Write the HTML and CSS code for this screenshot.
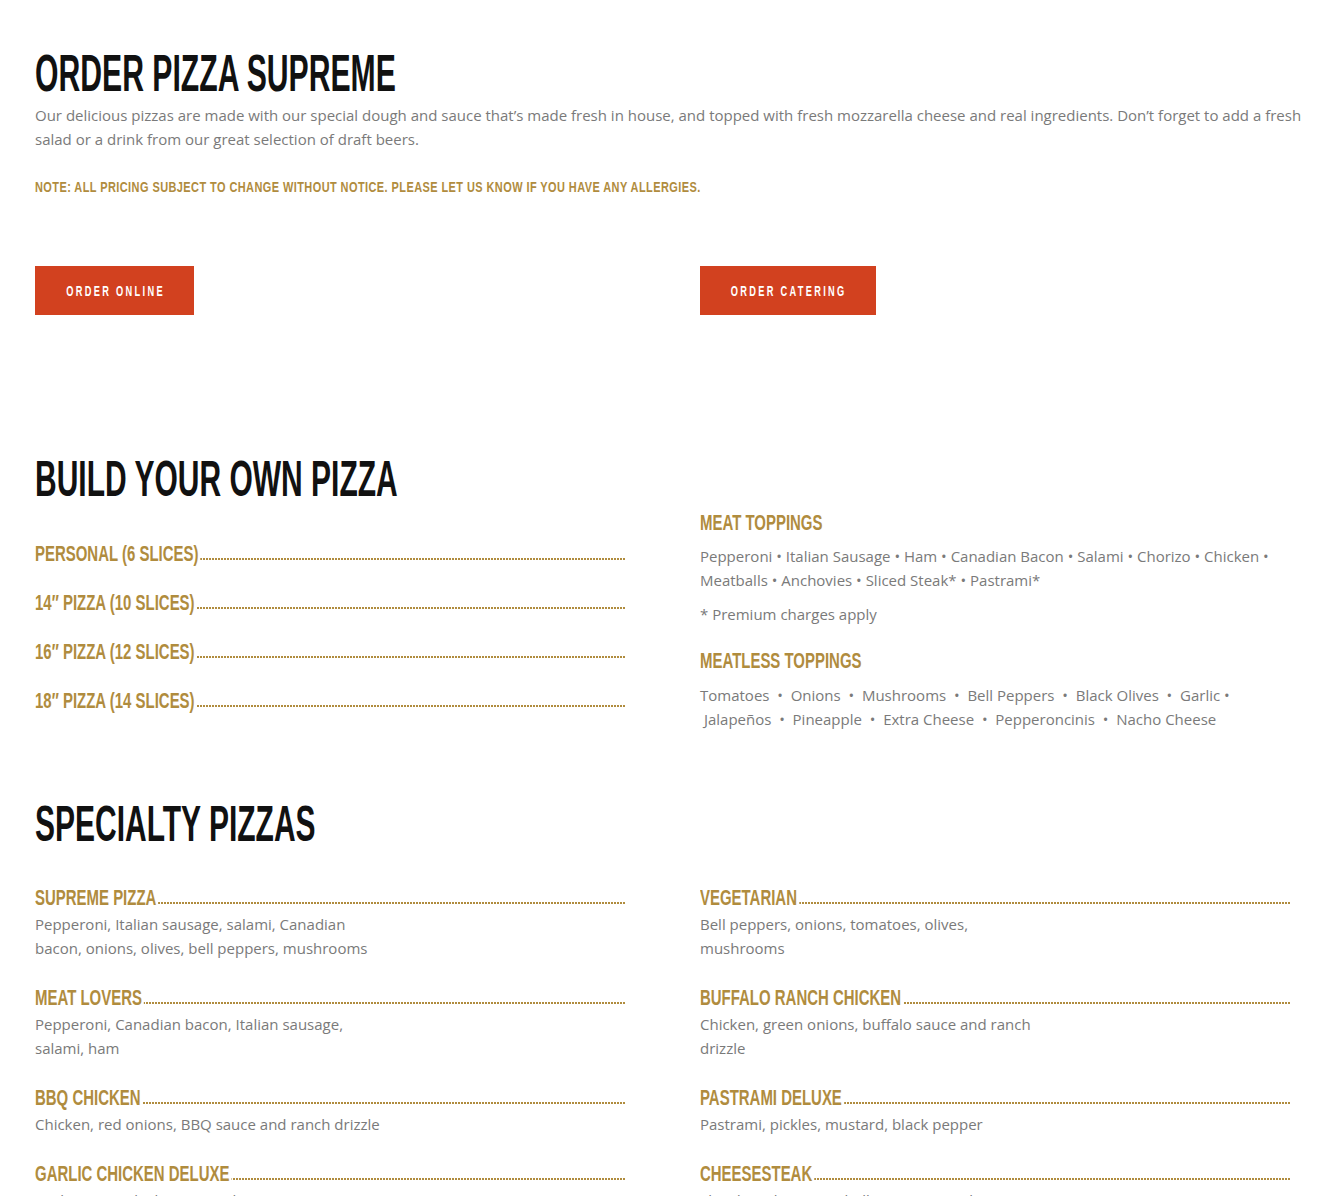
FILE: index.html
```html
<!DOCTYPE html>
<html lang="en">
<head>
<meta charset="utf-8">
<title>Order Pizza Supreme</title>
<link rel="stylesheet" href="styles.css">
</head>
<body>
<main class="page">
  <section class="intro-section">
    <h1 class="title-xl">ORDER PIZZA SUPREME</h1>
    <p class="intro">Our delicious pizzas are made with our special dough and sauce that’s made fresh in house, and topped with fresh mozzarella cheese and real ingredients. Don’t forget to add a fresh salad or a drink from our great selection of draft beers.</p>
    <p class="note">NOTE: ALL PRICING SUBJECT TO CHANGE WITHOUT NOTICE. PLEASE LET US KNOW IF YOU HAVE ANY ALLERGIES.</p>
    <div class="btn-row">
      <a class="btn btn-online" href="#"><span class="btn-label">ORDER ONLINE</span></a>
      <a class="btn btn-catering" href="#"><span class="btn-label">ORDER CATERING</span></a>
    </div>
  </section>

  <section class="build-section">
    <div class="col">
      <h2 class="title-lg">BUILD YOUR OWN PIZZA</h2>
      <ul class="size-list">
        <li class="item-head"><span class="item-title">PERSONAL (6 SLICES)</span></li>
        <li class="item-head"><span class="item-title">14″ PIZZA (10 SLICES)</span></li>
        <li class="item-head"><span class="item-title">16″ PIZZA (12 SLICES)</span></li>
        <li class="item-head"><span class="item-title">18″ PIZZA (14 SLICES)</span></li>
      </ul>
    </div>
    <div class="col col-toppings">
      <h3 class="sub-title">MEAT TOPPINGS</h3>
      <p class="toppings">Pepperoni • Italian Sausage • Ham • Canadian Bacon • Salami • Chorizo • Chicken • Meatballs • Anchovies • Sliced Steak* • Pastrami*</p>
      <p class="premium">* Premium charges apply</p>
      <h3 class="sub-title meatless">MEATLESS TOPPINGS</h3>
      <p class="toppings toppings-meatless">Tomatoes &nbsp;•&nbsp; Onions &nbsp;•&nbsp; Mushrooms &nbsp;•&nbsp; Bell Peppers &nbsp;•&nbsp; Black Olives &nbsp;•&nbsp; Garlic&nbsp;• &nbsp;Jalapeños &nbsp;•&nbsp; Pineapple &nbsp;•&nbsp; Extra Cheese &nbsp;•&nbsp; Pepperoncinis &nbsp;•&nbsp; Nacho Cheese</p>
    </div>
  </section>

  <section class="specialty-section">
    <h2 class="title-lg">SPECIALTY PIZZAS</h2>
    <div class="specialty-grid">
      <div class="pizza">
        <div class="item-head"><span class="item-title">SUPREME PIZZA</span></div>
        <p class="desc">Pepperoni, Italian sausage, salami, Canadian<br>bacon, onions, olives, bell peppers, mushrooms</p>
      </div>
      <div class="pizza">
        <div class="item-head"><span class="item-title">VEGETARIAN</span></div>
        <p class="desc">Bell peppers, onions, tomatoes, olives,<br>mushrooms</p>
      </div>
      <div class="pizza">
        <div class="item-head"><span class="item-title">MEAT LOVERS</span></div>
        <p class="desc">Pepperoni, Canadian bacon, Italian sausage,<br>salami, ham</p>
      </div>
      <div class="pizza">
        <div class="item-head"><span class="item-title">BUFFALO RANCH CHICKEN</span></div>
        <p class="desc">Chicken, green onions, buffalo sauce and ranch<br>drizzle</p>
      </div>
      <div class="pizza">
        <div class="item-head"><span class="item-title">BBQ CHICKEN</span></div>
        <p class="desc">Chicken, red onions, BBQ sauce and ranch drizzle</p>
      </div>
      <div class="pizza">
        <div class="item-head"><span class="item-title">PASTRAMI DELUXE</span></div>
        <p class="desc">Pastrami, pickles, mustard, black pepper</p>
      </div>
      <div class="pizza">
        <div class="item-head"><span class="item-title">GARLIC CHICKEN DELUXE</span></div>
        <p class="desc">Garlic sauce, chicken, spinach, tomatoes</p>
      </div>
      <div class="pizza">
        <div class="item-head"><span class="item-title">CHEESESTEAK</span></div>
        <p class="desc">Sliced steak, onions, bell peppers, mushrooms</p>
      </div>
    </div>
  </section>
</main>
</body>
</html>
```

FILE: styles.css
```css
* { box-sizing: border-box; }

body {
  margin: 0;
  background: #ffffff;
  font-family: "Open Sans", "Liberation Sans", sans-serif;
  font-size: 15px;
  line-height: 24px;
  color: #7a7a7a;
}

.page {
  padding: 43px 25px 40px 35px;
}

p { margin: 0; }

.title-xl,
.title-lg,
.note,
.btn-label,
.item-title,
.sub-title {
  font-family: "Liberation Sans", Arial, sans-serif;
  font-weight: 700;
  white-space: nowrap;
}

.title-xl {
  margin: 0;
  font-size: 52px;
  line-height: 60px;
  color: #111111;
  transform: scaleX(0.58);
  transform-origin: 0 50%;
}

.intro {
  margin: 0;
}

.note {
  margin-top: 26px;
  font-size: 15px;
  line-height: 20px;
  letter-spacing: 0.6px;
  color: #b08c3e;
  transform: scaleX(0.73);
  transform-origin: 0 50%;
}

.btn-row {
  display: grid;
  grid-template-columns: minmax(0, 1fr) minmax(0, 1fr);
  column-gap: 60px;
  margin-top: 69px;
}

.btn {
  display: flex;
  align-items: center;
  justify-content: center;
  justify-self: start;
  height: 49px;
  background: #d2411f;
  color: #ffffff;
  text-decoration: none;
}

.btn-online { width: 159px; }
.btn-catering { width: 176px; }

.btn-label {
  font-size: 14px;
  letter-spacing: 3.5px;
  padding-left: 3.5px;
  transform: scaleX(0.66);
  transform-origin: 50% 50%;
}

.build-section {
  display: grid;
  grid-template-columns: minmax(0, 1fr) minmax(0, 1fr);
  column-gap: 60px;
  margin-top: 135px;
}

.col {
  min-width: 0;
  padding-right: 15px;
}

.title-lg {
  margin: 0;
  font-size: 50px;
  line-height: 58px;
  color: #111111;
  transform: scaleX(0.60);
  transform-origin: 0 50%;
}

.size-list {
  list-style: none;
  margin: 30px 0 0;
  padding: 0;
}

.size-list .item-head {
  margin-bottom: 19px;
}

.size-list .item-head:last-child {
  margin-bottom: 0;
}

.item-head {
  height: 30px;
  font-size: 22px;
  line-height: 28px;
  color: #b08c3e;
  background-image: linear-gradient(to right, #b08c3e 0 2px, transparent 2px 3px);
  background-size: 3px 2px;
  background-repeat: repeat-x;
  background-position: 0 20px;
  white-space: nowrap;
}

.item-title {
  display: inline-block;
  padding-right: 3px;
  background: #ffffff;
  transform: scaleX(0.68);
  transform-origin: 0 50%;
}

.col-toppings {
  padding-top: 58px;
}

.sub-title {
  margin: 0;
  font-size: 22px;
  line-height: 30px;
  color: #b08c3e;
  transform: scaleX(0.68);
  transform-origin: 0 50%;
}

.toppings {
  margin-top: 6px;
}

.premium {
  margin-top: 10px;
}

.sub-title.meatless {
  margin-top: 20px;
}

.toppings-meatless {
  margin-top: 7px;
}

.specialty-section {
  margin-top: 64px;
}

.specialty-grid {
  display: grid;
  grid-template-columns: minmax(0, 1fr) minmax(0, 1fr);
  column-gap: 60px;
  row-gap: 22px;
  margin-top: 29px;
}

.pizza {
  min-width: 0;
  padding-right: 15px;
}

.desc {
  white-space: nowrap;
}
```
